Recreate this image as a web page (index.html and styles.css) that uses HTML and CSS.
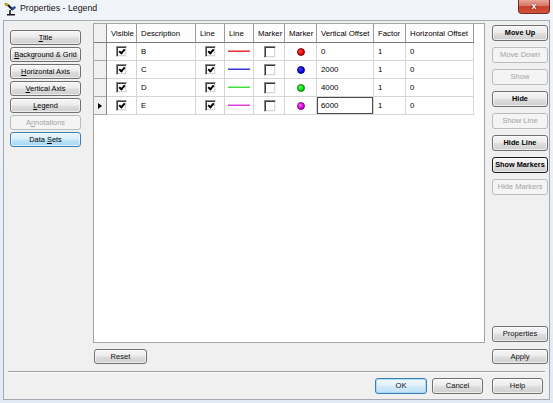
FILE: index.html
```html
<!DOCTYPE html>
<html>
<head>
<meta charset="utf-8">
<title>Properties - Legend</title>
<link rel="stylesheet" href="styles.css">
</head>
<body>
<div class="window">
  <div class="titlebar">
    <svg class="app-icon" width="13" height="14" viewBox="0 0 13 14">
      <path d="M1 1 L4 2 L3 4 L1 3 Z" fill="#f2c21a" stroke="#8a6a00" stroke-width="0.6"/>
      <path d="M4 3 L9 8" stroke="#1a1a1a" stroke-width="2.2"/>
      <path d="M7 6 L11 4 L12 6 L9 8 Z" fill="#2a4f9a"/>
      <path d="M3 12 L11 12 L11 13.5 L3 13.5 Z" fill="#1a1a1a"/>
      <path d="M6 8 L6 12" stroke="#1a1a1a" stroke-width="1.6"/>
    </svg>
    <span class="title">Properties - Legend</span>
    <div class="close">x</div>
  </div>
  <div class="client">
    <div class="main">
      <div class="left-nav">
        <button class="btn"><u>T</u>itle</button>
        <button class="btn"><u>B</u>ackground &amp; Grid</button>
        <button class="btn"><u>H</u>orizontal Axis</button>
        <button class="btn"><u>V</u>ertical Axis</button>
        <button class="btn"><u>L</u>egend</button>
        <button class="btn disabled">A<u>n</u>notations</button>
        <button class="btn hot">Data <u>S</u>ets</button>
      </div>

      <div class="grid-panel">
        <div class="grid">
          <div class="cell corner"></div>
          <div class="cell head">Visible</div>
          <div class="cell head">Description</div>
          <div class="cell head">Line</div>
          <div class="cell head">Line</div>
          <div class="cell head">Marker</div>
          <div class="cell head">Marker</div>
          <div class="cell head">Vertical Offset</div>
          <div class="cell head">Factor</div>
          <div class="cell head">Horizontal Offset</div>

          <div class="cell rowhead"></div>
          <div class="cell center"><span class="chk on"></span></div>
          <div class="cell text">B</div>
          <div class="cell center"><span class="chk on"></span></div>
          <div class="cell center"><svg class="swatch" width="22" height="3" viewBox="0 0 22 3"><rect x="0" y="0" width="22" height="1" fill="#f08c8c"/><rect x="0" y="1" width="22" height="1" fill="#e83a3a"/></svg></div>
          <div class="cell center"><span class="chk big"></span></div>
          <div class="cell center"><span class="dot dot-red"></span></div>
          <div class="cell text">0</div>
          <div class="cell text">1</div>
          <div class="cell text">0</div>

          <div class="cell rowhead"></div>
          <div class="cell center"><span class="chk on"></span></div>
          <div class="cell text">C</div>
          <div class="cell center"><span class="chk on"></span></div>
          <div class="cell center"><svg class="swatch" width="22" height="3" viewBox="0 0 22 3"><rect x="0" y="0" width="22" height="1" fill="#9a9aee"/><rect x="0" y="1" width="22" height="1" fill="#3a3ae0"/></svg></div>
          <div class="cell center"><span class="chk big"></span></div>
          <div class="cell center"><span class="dot dot-blue"></span></div>
          <div class="cell text">2000</div>
          <div class="cell text">1</div>
          <div class="cell text">0</div>

          <div class="cell rowhead"></div>
          <div class="cell center"><span class="chk on"></span></div>
          <div class="cell text">D</div>
          <div class="cell center"><span class="chk on"></span></div>
          <div class="cell center"><svg class="swatch" width="22" height="3" viewBox="0 0 22 3"><rect x="0" y="0" width="22" height="1" fill="#a6f0a6"/><rect x="0" y="1" width="22" height="1" fill="#3ee03e"/></svg></div>
          <div class="cell center"><span class="chk big"></span></div>
          <div class="cell center"><span class="dot dot-green"></span></div>
          <div class="cell text">4000</div>
          <div class="cell text">1</div>
          <div class="cell text">0</div>

          <div class="cell rowhead current"><span class="arrow"></span></div>
          <div class="cell center"><span class="chk on"></span></div>
          <div class="cell text">E</div>
          <div class="cell center"><span class="chk on"></span></div>
          <div class="cell center"><svg class="swatch" width="22" height="3" viewBox="0 0 22 3"><rect x="0" y="0" width="22" height="1" fill="#f0a0f0"/><rect x="0" y="1" width="22" height="1" fill="#e040e0"/></svg></div>
          <div class="cell center"><span class="chk big"></span></div>
          <div class="cell center"><span class="dot dot-magenta"></span></div>
          <div class="cell text focus">6000</div>
          <div class="cell text">1</div>
          <div class="cell text">0</div>
        </div>
      </div>

      <div class="right-col">
        <div class="actions">
          <button class="btn strong">Move Up</button>
          <button class="btn disabled">Move Down</button>
          <button class="btn disabled">Show</button>
          <button class="btn strong">Hide</button>
          <button class="btn disabled">Show Line</button>
          <button class="btn strong">Hide Line</button>
          <button class="btn strong focused">Show Markers</button>
          <button class="btn disabled">Hide Markers</button>
        </div>
        <button class="btn">Properties</button>
      </div>

      <div></div>
      <div class="reset-row"><button class="btn wide">Reset</button></div>
      <div class="apply-cell"><button class="btn">Apply</button></div>
    </div>

    <div class="separator"></div>

    <div class="footer">
      <button class="btn default ok">OK</button>
      <button class="btn cancel">Cancel</button>
      <button class="btn help">Help</button>
    </div>
  </div>
</div>
</body>
</html>
```

FILE: styles.css
```css
* { box-sizing: border-box; }

body {
  margin: 0;
  font-family: "Liberation Sans", Arial, sans-serif;
  background: #ffffff;
}

.window {
  width: 553px;
  height: 403px;
  padding: 0 3px 3px 3px;
  background: linear-gradient(#f1f5fa, #e2eaf3);
  display: flex;
  flex-direction: column;
}

/* ---------- title bar ---------- */
.titlebar {
  height: 20px;
  display: flex;
  align-items: center;
  flex-shrink: 0;
}

.app-icon {
  margin-left: 1px;
  margin-top: -3px;
}

.title {
  margin-left: 3px;
  margin-top: -5px;
  font-size: 8.8px;
  color: #111;
}

.close {
  margin-left: auto;
  align-self: flex-start;
  width: 32px;
  height: 14px;
  border: 1px solid #7a2a20;
  border-top: none;
  border-radius: 0 0 4px 4px;
  background: linear-gradient(#eaa596 0%, #d77b6b 42%, #c2402b 52%, #d4533a 100%);
  color: #fff;
  font-weight: bold;
  font-size: 9px;
  line-height: 12px;
  text-align: center;
  text-shadow: 0 0 2px #5a1208;
}

/* ---------- client area ---------- */
.client {
  flex: 1;
  background: #f0f0f0;
  border: 1px solid #a3aab3;
  padding: 2px 6px 0 6px;
}

.main {
  display: grid;
  grid-template-columns: 71px 392px 51px;
  grid-template-rows: 320px 15px;
  column-gap: 12px;
  row-gap: 6px;
}
.main > .right-col,
.main > .apply-cell { margin-left: -5px; }

/* ---------- buttons ---------- */
.btn {
  display: block;
  font: inherit;
  font-size: 7.6px;
  line-height: 13px;
  text-align: center;
  color: #111;
  padding: 0;
  margin: 0;
  height: 15px;
  width: 100%;
  border: 1px solid #707070;
  border-radius: 3px;
  background: linear-gradient(#f6f6f6 0%, #ececec 45%, #dddddd 55%, #cfcfcf 100%);
  box-shadow: inset 0 0 0 1px rgba(255, 255, 255, 0.6);
  white-space: nowrap;
  overflow: hidden;
}

.btn u { text-decoration: underline; text-underline-offset: 1px; }

.left-nav .btn { font-size: 7.4px; color: #000; }

.btn.disabled,
.left-nav .btn.disabled {
  border-color: #b8bcc0;
  background: #f4f4f4;
  color: #a3a3a3;
  box-shadow: none;
}

.btn.hot {
  border-color: #3c7fb1;
  background: linear-gradient(#e9f5fc 0%, #d8effb 45%, #bde4f8 55%, #a6d7f2 100%);
}

.btn.default {
  border-color: #3c7fb1;
  background: linear-gradient(#f0f8fd 0%, #e3f2fb 45%, #cfe9f8 55%, #c0e2f5 100%);
  box-shadow: inset 0 0 0 1px rgba(160, 215, 245, 0.8);
}

.btn.strong { font-weight: bold; font-size: 7.3px; color: #000; }
.btn.focused { border-color: #1e1e1e; }

/* ---------- left nav ---------- */
.left-nav {
  padding-top: 7px;
  display: flex;
  flex-direction: column;
  gap: 2px;
}

/* ---------- grid panel ---------- */
.grid-panel {
  background: #ffffff;
  border: 1px solid #a5a5a5;
}

.grid {
  display: grid;
  grid-template-columns: 13px 30px 59px 29px 29px 31px 32px 57px 32px 68px;
  grid-template-rows: 19px repeat(4, 18px);
  width: 380px;
  font-size: 7.8px;
  color: #000;
}

.cell {
  border-right: 1px solid #d5d5d5;
  border-bottom: 1px solid #d5d5d5;
  display: flex;
  align-items: center;
  white-space: nowrap;
  overflow: hidden;
}

.cell.head {
  padding-left: 4px;
  background: #fdfdfd;
  border-right-color: #9a9a9a;
  border-bottom-color: #7a7a7a;
}

.cell.corner {
  background: #f0f0f0;
  border-right-color: #8a8a8a;
  border-bottom-color: #7a7a7a;
}

.cell.rowhead {
  background: #f0f0f0;
  border-right-color: #8a8a8a;
  border-bottom-color: #a8a8a8;
  justify-content: center;
}

.cell.text { padding-left: 4px; }
.cell.center { justify-content: center; }

.cell.focus {
  box-shadow: inset 0 0 0 1px #4a4a4a;
}

.arrow {
  width: 0;
  height: 0;
  border-left: 4px solid #000;
  border-top: 3px solid transparent;
  border-bottom: 3px solid transparent;
  margin-left: -1px;
}

/* checkboxes */
.chk {
  width: 11px;
  height: 11px;
  background: #fff;
  border: 1px solid;
  border-color: #8a8a8a #f4f4f4 #f4f4f4 #8a8a8a;
  box-shadow: inset 1px 1px 0 #3c3c3c, inset -1px -1px 0 #d8d8d8;
  position: relative;
}
.chk.big {
  width: 12px;
  height: 12px;
  margin-left: 1px;
}
.chk.on::after {
  content: "";
  position: absolute;
  left: 2px;
  top: 2px;
  width: 4px;
  height: 2px;
  border-left: 2px solid #000;
  border-bottom: 2px solid #000;
  transform: rotate(-48deg);
}

/* line swatches */
.swatch {
  display: block;
  margin-left: -1px;
  shape-rendering: crispEdges;
}

/* marker dots */
.dot {
  width: 8px;
  height: 8px;
  border-radius: 50%;
  border: 1px solid;
}
.dot-red { background: radial-gradient(circle at 35% 35%, #ff4a4a, #e00000 60%); border-color: #7a0000; }
.dot-blue { background: radial-gradient(circle at 35% 35%, #4a4aff, #0000d8 60%); border-color: #00007a; }
.dot-green { background: radial-gradient(circle at 35% 35%, #6aff6a, #00d800 60%); border-color: #007a00; }
.dot-magenta { background: radial-gradient(circle at 35% 35%, #ff6aff, #d800d8 60%); border-color: #7a007a; }

/* ---------- right column ---------- */
.right-col {
  padding-top: 2px;
  padding-bottom: 1px;
  display: flex;
  flex-direction: column;
  justify-content: space-between;
}
.right-col .btn { height: 16px; line-height: 14px; }

.actions {
  display: flex;
  flex-direction: column;
  gap: 6px;
}

.reset-row .btn.wide {
  width: 53px;
  margin-left: 1px;
}

/* ---------- footer ---------- */
.separator {
  margin: 7px -2px 0 -2px;
  height: 2px;
  border-top: 1px solid #a0a0a0;
  border-bottom: 1px solid #ffffff;
}

.footer {
  margin-top: 5px;
  display: flex;
  justify-content: flex-end;
}
.footer .btn { height: 16px; line-height: 14px; width: 51px; }
.footer .ok { width: 52px; }
.footer .cancel { margin-left: 5px; }
.footer .help { margin-left: 9px; }
```
